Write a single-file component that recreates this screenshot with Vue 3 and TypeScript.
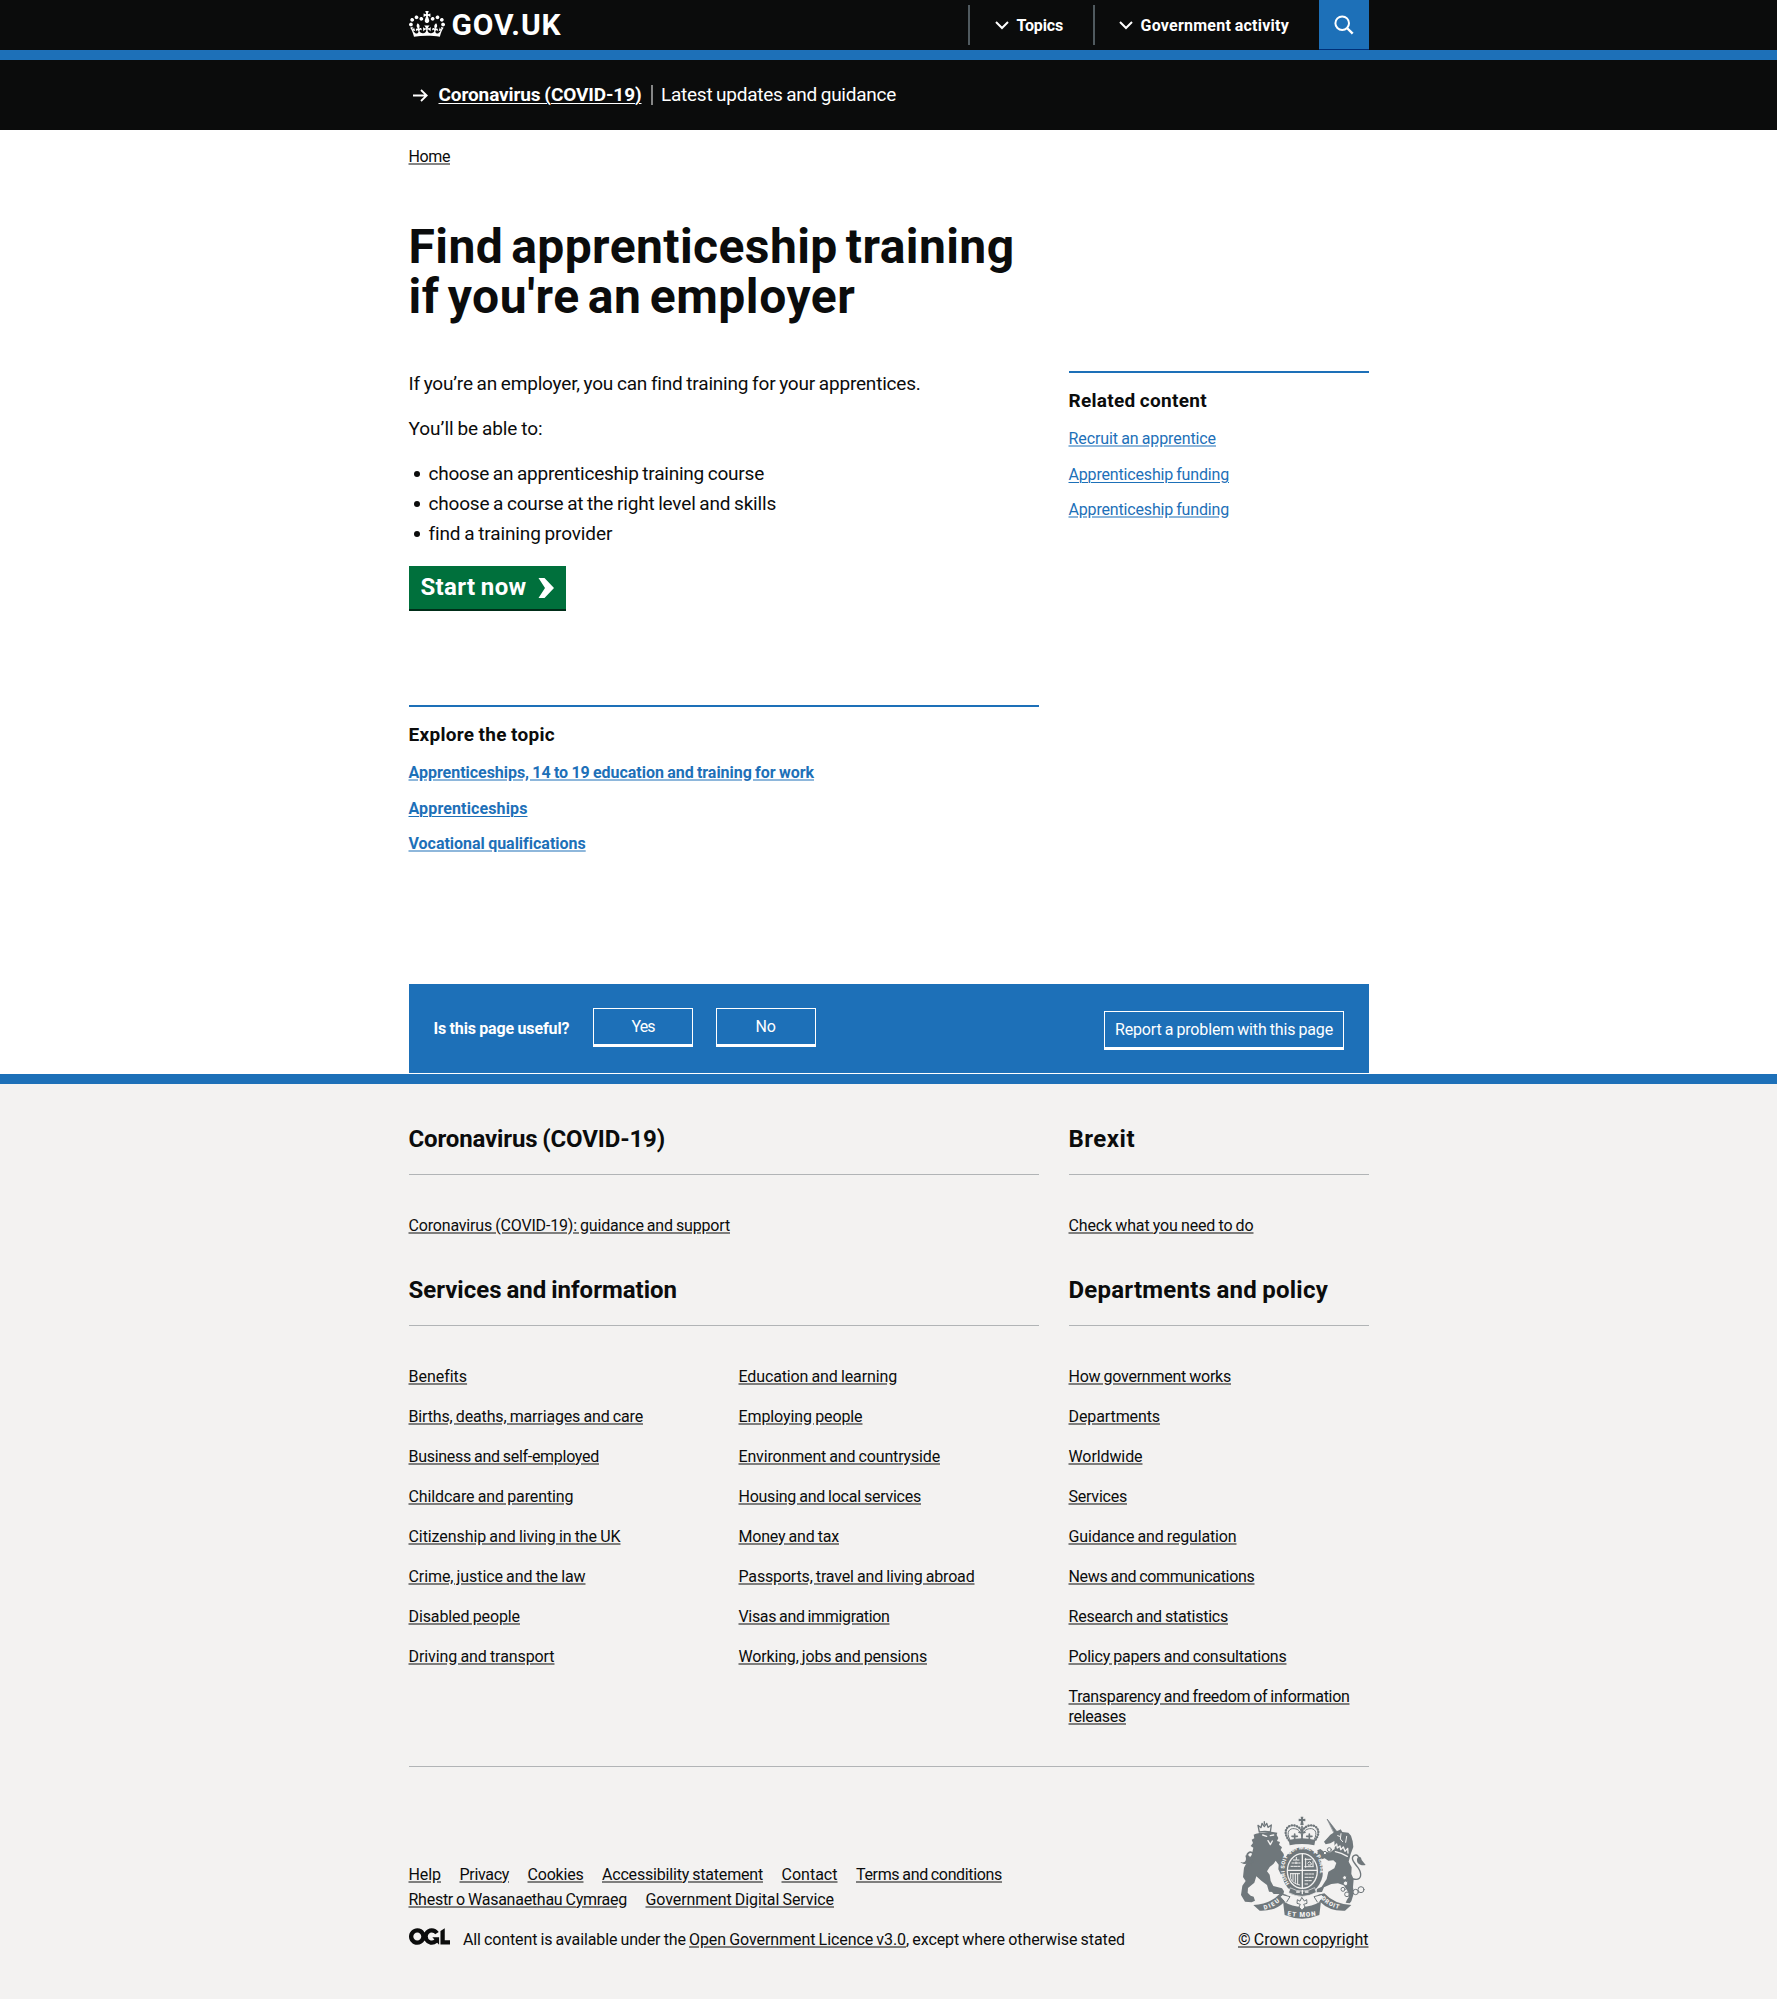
<script setup lang="ts">
import type { Directive } from 'vue'

interface Item {
  text: string
  w: number
  soft?: boolean
}

// Tracks a run of text so that it fills the given width in pixels.
const vFit: Directive<HTMLElement, number> = {
  mounted(el, { value }) {
    el.style.letterSpacing = '0'
    const natural = el.getBoundingClientRect().width
    const count = (el.textContent ?? '').length
    if (count > 0) el.style.letterSpacing = `${((value - natural) / count).toFixed(4)}px`
  },
}

const bullets: Item[] = [
  { text: 'choose an apprenticeship training course', w: 335.5 },
  { text: 'choose a course at the right level and skills', w: 347.5 },
  { text: 'find a training provider', w: 183 },
]

const related: Item[] = [
  { text: 'Recruit an apprentice', w: 147.5, soft: true },
  { text: 'Apprenticeship funding', w: 160.5 },
  { text: 'Apprenticeship funding', w: 160.5, soft: true },
]

const topics: Item[] = [
  { text: 'Apprenticeships, 14 to 19 education and training for work', w: 405.5, soft: true },
  { text: 'Apprenticeships', w: 119 },
  { text: 'Vocational qualifications', w: 177, soft: true },
]

const servicesA: Item[] = [
  { text: 'Benefits', w: 58 },
  { text: 'Births, deaths, marriages and care', w: 234.5 },
  { text: 'Business and self-employed', w: 190.5 },
  { text: 'Childcare and parenting', w: 165 },
  { text: 'Citizenship and living in the UK', w: 212 },
  { text: 'Crime, justice and the law', w: 177 },
  { text: 'Disabled people', w: 111.5 },
  { text: 'Driving and transport', w: 146 },
]

const servicesB: Item[] = [
  { text: 'Education and learning', w: 158.5 },
  { text: 'Employing people', w: 124 },
  { text: 'Environment and countryside', w: 201.5 },
  { text: 'Housing and local services', w: 182.5 },
  { text: 'Money and tax', w: 100.5 },
  { text: 'Passports, travel and living abroad', w: 236 },
  { text: 'Visas and immigration', w: 151 },
  { text: 'Working, jobs and pensions', w: 188.5 },
]

const departments: Item[] = [
  { text: 'How government works', w: 162.5 },
  { text: 'Departments', w: 91.5 },
  { text: 'Worldwide', w: 74 },
  { text: 'Services', w: 58.5 },
  { text: 'Guidance and regulation', w: 168 },
  { text: 'News and communications', w: 186 },
  { text: 'Research and statistics', w: 159.5 },
  { text: 'Policy papers and consultations', w: 218 },
]

const meta: Item[][] = [
  [
    { text: 'Help', w: 32.5 },
    { text: 'Privacy', w: 49.5 },
    { text: 'Cookies', w: 56 },
    { text: 'Accessibility statement', w: 161 },
    { text: 'Contact', w: 56 },
    { text: 'Terms and conditions', w: 146 },
  ],
  [
    { text: 'Rhestr o Wasanaethau Cymraeg', w: 218.5 },
    { text: 'Government Digital Service', w: 188.5 },
  ],
]
</script>

<template>
  <div class="page">
    <header class="header">
      <div class="wrap header-row">
        <a class="logo">
          <svg class="crown" viewBox="0 0 132 97" preserveAspectRatio="none" aria-hidden="true">
            <path
              fill="#fff"
              fill-rule="evenodd"
              d="M25 30.2c3.5 1.5 7.7-.2 9.1-3.7 1.5-3.6-.2-7.8-3.9-9.2-3.6-1.4-7.6.3-9.1 3.9-1.4 3.5.3 7.5 3.9 9zM9 39.5c3.6 1.5 7.8-.2 9.2-3.7 1.5-3.6-.2-7.8-3.9-9.1-3.6-1.5-7.6.2-9.1 3.8-1.4 3.5.3 7.5 3.8 9zM4.4 57.2c3.5 1.5 7.7-.2 9.1-3.8 1.5-3.6-.2-7.7-3.9-9.1-3.5-1.5-7.6.3-9.1 3.8-1.4 3.5.3 7.6 3.9 9.1zm38.3-21.4c3.5 1.5 7.7-.2 9.1-3.8 1.5-3.6-.2-7.7-3.9-9.1-3.6-1.5-7.6.3-9.1 3.8-1.3 3.6.4 7.7 3.9 9.1zm64.4-5.6c-3.6 1.5-7.8-.2-9.1-3.7-1.5-3.6.2-7.8 3.8-9.2 3.6-1.4 7.7.3 9.2 3.9 1.3 3.5-.4 7.5-3.9 9zm15.9 9.3c-3.6 1.5-7.7-.2-9.1-3.7-1.5-3.6.2-7.8 3.7-9.1 3.6-1.5 7.7.2 9.2 3.8 1.5 3.5-.3 7.5-3.8 9zm4.7 17.7c-3.6 1.5-7.8-.2-9.2-3.8-1.5-3.6.2-7.7 3.9-9.1 3.6-1.5 7.7.3 9.2 3.8 1.3 3.5-.4 7.6-3.9 9.1zM89.3 35.8c-3.6 1.5-7.8-.2-9.2-3.8-1.4-3.6.2-7.7 3.9-9.1 3.6-1.5 7.7.3 9.2 3.8 1.4 3.6-.3 7.7-3.9 9.1zM69.7 17.7l8.9 4.7V9.3l-8.9 2.8c-.2-.3-.5-.6-.9-.9L72.4 0H59.6l3.5 11.2c-.3.3-.6.5-.9.9l-8.8-2.8v13.1l8.8-4.7c.3.3.6.7.9.9l-5 15.4v.1c-.2.8-.4 1.6-.4 2.4 0 4.1 3.1 7.5 7 8.1h.2c.3 0 .7.1 1 .1.4 0 .7 0 1-.1h.2c4-.6 7.1-4.1 7.1-8.1 0-.8-.1-1.7-.4-2.4V34l-5.1-15.4c.4-.2.7-.6 1-.9zM66 92.8c16.9 0 32.8 1.1 47.1 3.2 4-16.9 8.9-26.7 14-33.5l-9.6-3.4c1 4.9 1.1 7.2 0 10.2-1.5-1.4-3-4.3-4.2-8.7L108.6 76c2.8-2 5-3.2 7.5-3.3-4.4 9.4-10 11.9-13.6 11.2-4.3-.8-6.3-4.6-5.6-7.9 1-4.7 5.7-5.9 8-.5 4.3-8.7-3-11.4-7.6-8.8 7.1-7.2 7.9-13.5 2.1-21.1-8 6.1-8.1 12.3-4.5 20.8-4.7-5.4-12.1-2.5-9.5 6.2 3.4-5.2 7.9-2 7.2 3.1-.6 4.3-6.4 7.8-13.5 7.2-10.3-.9-10.9-8-11.2-13.8 2.5-.5 7.1 1.8 11 7.3L80.2 60c-4.1 4.4-8 5.3-12.3 5.4 1.4-4.4 8-11.6 8-11.6H55.5s6.4 7.2 7.9 11.6c-4.2-.1-8-1-12.3-5.4l1.4 16.4c3.9-5.5 8.5-7.7 10.9-7.3-.3 5.8-.9 12.8-11.1 13.8-7.2.6-12.9-2.9-13.5-7.2-.7-5 3.8-8.3 7.1-3.1 2.7-8.7-4.6-11.6-9.4-6.2 3.7-8.5 3.6-14.7-4.6-20.8-5.8 7.6-5 13.9 2.2 21.1-4.7-2.6-11.9.1-7.7 8.8 2.3-5.5 7.1-4.2 8.1.5.7 3.3-1.3 7.1-5.7 7.9-3.5.7-9-1.8-13.5-11.2 2.5.1 4.7 1.3 7.5 3.3l-4.7-15.4c-1.2 4.4-2.7 7.2-4.3 8.7-1.1-3-.9-5.3 0-10.2l-9.5 3.4c5 6.9 9.9 16.7 14 33.5 14.8-2.1 30.8-3.2 47.7-3.2z"
            />
          </svg>
          <span v-fit="110" class="logo-text">GOV.UK</span>
        </a>
        <nav class="nav">
          <a class="nav-item nav-topics">
            <svg class="chevron" viewBox="0 0 14 9"><path d="M1 1l6 6 6-6" fill="none" stroke="#fff" stroke-width="2" /></svg>
            <span v-fit="46.5">Topics</span>
          </a>
          <a class="nav-item nav-gov">
            <svg class="chevron" viewBox="0 0 14 9"><path d="M1 1l6 6 6-6" fill="none" stroke="#fff" stroke-width="2" /></svg>
            <span v-fit="148.5">Government activity</span>
          </a>
          <a class="search">
            <svg width="20" height="20" viewBox="0 0 20 20">
              <circle cx="8.2" cy="8.2" r="6.8" fill="none" stroke="#fff" stroke-width="2" />
              <path d="M13 13l5.7 5.7" stroke="#fff" stroke-width="2.4" />
            </svg>
          </a>
        </nav>
      </div>
    </header>

    <div class="covid">
      <div class="wrap covid-row">
        <svg class="arrow" width="15" height="13" viewBox="0 0 15 13">
          <path d="M0 6.5h13.5M8 1l5.7 5.5L8 12" fill="none" stroke="#fff" stroke-width="1.8" />
        </svg>
        <a v-fit="203" class="covid-link">Coronavirus (COVID-19)</a>
        <span class="covid-bar"></span>
        <span v-fit="235">Latest updates and guidance</span>
      </div>
    </div>

    <main class="wrap main">
      <nav class="crumbs"><a v-fit="41.5" class="soft">Home</a></nav>

      <h1>
        <span v-fit="606">Find apprenticeship training</span>
        <span v-fit="447">if you're an employer</span>
      </h1>

      <div class="columns">
        <div class="content">
          <p><span v-fit="511.5">If you’re an employer, you can find training for your apprentices.</span></p>
          <p><span v-fit="134">You’ll be able to:</span></p>
          <ul class="bullets">
            <li v-for="b in bullets" :key="b.text"><span v-fit="b.w">{{ b.text }}</span></li>
          </ul>
          <a class="start">
            <span v-fit="106">Start now</span>
            <svg width="16" height="20" viewBox="0 0 16 20"><path fill="#fff" d="M.5 0h6L16 10 6.500 20h-6L7 10z" /></svg>
          </a>
        </div>
        <aside class="related">
          <h2><span v-fit="138.5">Related content</span></h2>
          <ul>
            <li v-for="(r, i) in related" :key="i"><a v-fit="r.w" :class="{ soft: r.soft }">{{ r.text }}</a></li>
          </ul>
        </aside>
      </div>

      <section class="related explore">
        <h2><span v-fit="146.5">Explore the topic</span></h2>
        <ul>
          <li v-for="t in topics" :key="t.text"><a v-fit="t.w" :class="{ soft: t.soft }">{{ t.text }}</a></li>
        </ul>
      </section>

      <section class="feedback">
        <b v-fit="136">Is this page useful?</b>
        <button type="button" class="fb yes"><span v-fit="23">Yes</span></button>
        <button type="button" class="fb no"><span v-fit="20">No</span></button>
        <button type="button" class="fb report"><span v-fit="218">Report a problem with this page</span></button>
      </section>
    </main>

    <footer class="footer">
      <div class="wrap">
        <div class="foot-grid foot-first">
          <section>
            <h2><span v-fit="256.5">Coronavirus (COVID-19)</span></h2>
            <ul><li><a v-fit="321.5">Coronavirus (COVID-19): guidance and support</a></li></ul>
          </section>
          <section>
            <h2><span v-fit="66.5">Brexit</span></h2>
            <ul><li><a v-fit="185">Check what you need to do</a></li></ul>
          </section>
        </div>
        <div class="foot-grid">
          <section>
            <h2><span v-fit="268.5">Services and information</span></h2>
            <div class="two">
              <ul><li v-for="s in servicesA" :key="s.text"><a v-fit="s.w">{{ s.text }}</a></li></ul>
              <ul><li v-for="s in servicesB" :key="s.text"><a v-fit="s.w">{{ s.text }}</a></li></ul>
            </div>
          </section>
          <section>
            <h2><span v-fit="259.5">Departments and policy</span></h2>
            <ul>
              <li v-for="d in departments" :key="d.text"><a v-fit="d.w">{{ d.text }}</a></li>
              <li>
                <a><span v-fit="281">Transparency and freedom of information</span><br /><span v-fit="57.5">releases</span></a>
              </li>
            </ul>
          </section>
        </div>

        <div class="foot-meta">
          <div class="meta-left">
            <div v-for="(row, i) in meta" :key="i" class="meta-row">
              <a v-for="m in row" :key="m.text" v-fit="m.w">{{ m.text }}</a>
            </div>
            <div class="licence">
              <svg class="ogl" width="41" height="17" viewBox="0 0 483.2 195.7">
                <path
                  fill="#0b0c0c"
                  d="M421.5 142.8V.1l-50.7 32.3v161.1h112.4v-50.7zm-122.3-9.6A47.12 47.12 0 0 1 221 97.8c0-26 21.1-47.1 47.1-47.1 16.7 0 31.4 8.7 39.7 21.8l42.7-27.2A97.63 97.63 0 0 0 268.1 0c-36.5 0-68.3 20.1-85.1 49.7A98 98 0 0 0 97.8 0C43.9 0 0 43.9 0 97.8s43.9 97.8 97.8 97.8c36.5 0 68.3-20.1 85.1-49.7a97.76 97.76 0 0 0 149.6 25.4l19.4 22.2h3v-87.8h-80l24.3 27.5zM97.8 145c-26 0-47.1-21.1-47.1-47.1s21.1-47.1 47.1-47.1 47.1 21.1 47.1 47.1S123.8 145 97.8 145"
                />
              </svg>
              <span class="licence-text"><span v-fit="226">All content is available under the </span><a v-fit="217">Open Government Licence v3.0</a><span v-fit="219">, except where otherwise stated</span></span>
            </div>
          </div>
          <div class="meta-right">
            <svg class="crest" width="126" height="103" viewBox="59 49 378 309" fill="#6f777b" stroke-linecap="round" stroke-linejoin="round">
              <!-- royal crown -->
              <g>
                <path d="M241 51h8l-1 7 7-1v8l-7-1 2 12h-10l2-12-7 1v-8l7 1z" />
                <path d="M205 121q40-10 80 0l-3 16q-37-8-74 0z" />
                <path d="M206 122C182 92 206 70 228 79c9 4 14 10 17 16 3-6 8-12 17-16 22-9 46 13 22 43" fill="none" stroke="#6f777b" stroke-width="7" stroke-dasharray="1 7" />
                <path d="M208 119c-12-22 0-34 14-32 12 1 20 10 23 24 3-14 11-23 23-24 14-2 26 10 14 32" fill="none" stroke="#6f777b" stroke-width="3" />
                <path d="M245 80v38M236 98h18M223 103v15M215 110h16M267 103v15M259 110h16" fill="none" stroke="#6f777b" stroke-width="5" />
              </g>
              <!-- lion -->
              <g>
                <path d="M117 97l-4-20 9 7 3-13 7 10 7-10 4 12 10-7-3 21q-16-4-33 0z" fill="none" stroke="#6f777b" stroke-width="4" />
                <path d="M132 66v8" stroke="#6f777b" stroke-width="4" />
                <path d="M121 99l32-3 18 3-2 7 5 9-4 9 9 3-3 8 9 8-4 8 8 10 6 18-1 22-9 10 6 8-9 6-8-16 1-14-9-12-6 9-12 10-8 13 8 10 3 19 8 15 26 7 6 9-2 11-10-3-19 0-5-6-9-1-6-20-17-13-15-13-6 19-19 16-1 14 9 9 9 3 4 12-10 5-20-2-8-13-4-7 4-28 10-14-8-12 3-28 14-26 9-12 5-22-8-5 7-9-4-10 8-4-2-11 7-3z" />
                <path d="M127 106l12 4M150 108l10-2M143 123l7 12 6-11" fill="none" stroke="#f3f2f1" stroke-width="4" />
                <path d="M94 238c-22-3-21-20-8-35 14-17 20-36 9-44-7-5-18 4-13 13" fill="none" stroke="#6f777b" stroke-width="5" />
                <path d="M60 187c15 5 20-6 15-19 11-4 16 3 14 13-3 12-17 17-29 6z" />
              </g>
              <!-- unicorn -->
              <g>
                <path d="M321 59l29 37-8 4z" stroke="#6f777b" stroke-width="2" />
                <path d="M330 105l14-9 12-4 5-3 5 8 18 2 8 9 5 17 2 17-8 21-6 23 9 17-1 20 7 16-2 24 3 16-8 26-5 6-12-2 4-9 5-7-3-18-12-18-17-6-20 2-22 10-6 14-17 1 2-10 14-7 15-23 5-22 18-10 6-16-9-8-15 1-11-7-14 5 4 20-9-6-6-14-5-14 9-5-1-10 9-4 12 9 18 1 13-10-1-24-12 7-14 3-5-8 11-12z" />
                <path d="M341 142l8-9 2 12 8-6 2 11 8-8 5 13 8-9 1 14M345 156q18 4 36 14" fill="none" stroke="#f3f2f1" stroke-width="4" />
                <path d="M352 108l6 2M362 102l-2 16 7 8M379 110l-3 18" fill="none" stroke="#f3f2f1" stroke-width="3" />
                <path d="M399 238c27 6 26-17 14-34-13-16-24-30-11-37 9-4 16 5 11 12" fill="none" stroke="#6f777b" stroke-width="4" />
                <path d="M436 196c-15 4-28-4-26-17 6-14 13-6 14 2z" />
                <g fill="#f3f2f1" stroke="#6f777b" stroke-width="3">
                  <circle cx="327" cy="150" r="6" /><circle cx="314" cy="160" r="5" />
                  <circle cx="373" cy="234" r="6" /><circle cx="376" cy="251" r="7" />
                  <circle cx="368" cy="269" r="6" /><circle cx="380" cy="284" r="7" />
                  <circle cx="406" cy="277" r="8" /><circle cx="422" cy="270" r="9" />
                </g>
              </g>
              <!-- garter and shield -->
              <ellipse cx="246" cy="214" rx="62" ry="71" />
              <ellipse cx="246" cy="214" rx="47" ry="54" fill="#f3f2f1" />
              <ellipse cx="246" cy="214" rx="43" ry="50" />
              <path d="M203 212h86M246 164v100" stroke="#f3f2f1" stroke-width="4" />
              <g stroke="#f3f2f1" stroke-width="3" fill="none">
                <path d="M219 181h20M215 190h24M212 200h27M228 173v8M227 187v5" stroke-dasharray="7 3" />
                <path d="M254 179h18M253 201h26M256 176v27M278 184v15M262 190q5-8 10 0t-8 6" />
                <path d="M211 222v15q7 15 27 19M218 222v20M225 222v26M232 222v30M210 222h28" />
                <path d="M254 223h26M254 233h25M254 243h20M254 253h11" stroke-dasharray="8 3" />
              </g>
              <path id="garterPath" d="M208 251C181 223 187 149 246 149s67 80 36 106" fill="none" />
              <text class="crest-text" font-size="16" fill="#f3f2f1"><textPath href="#garterPath" textLength="238">HONI SOIT QUI MAL Y PENSE</textPath></text>
              <path d="M211 265q35 20 72-1l5 14q-42 24-83 1z" stroke="#f3f2f1" stroke-width="2" />
              <path d="M229 277h8M255 277h8M246 272v10" stroke="#f3f2f1" stroke-width="4" />
              <!-- motto scroll -->
              <path d="M99 316Q150 314 180 281L198 285Q210 297 192 307Q165 335 118 333z" />
              <path d="M393 316Q342 314 312 281L294 285Q282 297 300 307Q327 335 374 333z" />
              <path d="M191 304l-12-13 8-6 22 6-10 16M299 304l12-13-8-6-22 6 10 16" fill="#f3f2f1" stroke="#6f777b" stroke-width="3" />
              <path d="M188 305q57 34 114 0l-5 41q-52 22-104 0z" />
              <path d="M245 294l7 10 7-4 1 11-10 3 4 8-9 10-9-10 4-8-10-3 1-11 7 4z" fill="#f3f2f1" stroke="#6f777b" stroke-width="3" />
              <path id="dieuPath" d="M132 330q29-6 52-30" fill="none" />
              <path id="monPath" d="M201 347q44 9 90 0" fill="none" />
              <path id="droitPath" d="M302 297q23 25 61 33" fill="none" />
              <g class="crest-text" fill="#f3f2f1">
                <text font-size="18"><textPath href="#dieuPath" textLength="53">DIEU</textPath></text>
                <text font-size="19"><textPath href="#monPath" textLength="86">ET MON</textPath></text>
                <text font-size="18"><textPath href="#droitPath" textLength="62">DROIT</textPath></text>
              </g>
            </svg>
            <a v-fit="130.5">© Crown copyright</a>
          </div>
        </div>
      </div>
    </footer>
  </div>
</template>

<style>
body {
  margin: 0;
  background: #fff;
}
</style>

<style scoped>
.page {
  font-family: Roboto, 'Liberation Sans', sans-serif;
  font-size: 16px;
  line-height: 20px;
  color: #0b0c0c;
  height: 1999px;
  overflow: hidden;
  display: flex;
  flex-direction: column;
}
.page span,
.page a,
.page b {
  word-spacing: -0.04em;
}
.wrap {
  width: 960px;
  margin: 0 auto;
}
h1,
h2,
p,
ul {
  margin: 0;
  padding: 0;
}
ul {
  list-style: none;
}
a {
  white-space: nowrap;
}
.header {
  background: #0b0c0c;
  border-bottom: 10px solid #1d70b8;
}
.header-row {
  height: 50px;
  display: flex;
  justify-content: space-between;
}
.logo {
  display: flex;
  color: #fff;
  padding-top: 11px;
}
.crown {
  width: 36px;
  height: 26px;
}
.logo-text {
  margin-left: 7px;
  font-size: 30px;
  line-height: 28px;
  font-weight: 700;
  white-space: nowrap;
}
.nav {
  display: flex;
  color: #fff;
  font-weight: 700;
}
.nav-item {
  display: flex;
  align-items: center;
  box-sizing: border-box;
  height: 40px;
  margin-top: 5px;
  padding-left: 24.500px;
  border-left: 2px solid #505a5f;
}
.nav-item span {
  padding-top: 1px;
}
.nav-topics {
  width: 125px;
}
.nav-gov {
  width: 225.5px;
}
.nav-gov .chevron {
  margin-left: -1px;
}
.chevron {
  width: 14px;
  height: 9px;
  margin-right: 8px;
  margin-top: 1px;
}
.search {
  width: 50px;
  height: 49px;
  background: #1d70b8;
  border-bottom: 1px solid #003078;
}
.search svg {
  display: block;
  margin: 15px 0 0 15.5px;
}
.covid {
  background: #0b0c0c;
  height: 70px;
  color: #fff;
  font-size: 19px;
  line-height: 25px;
}
.covid-row {
  display: flex;
  padding-top: 22px;
  align-items: center;
}
.arrow {
  margin: 1px 11px 0 4px;
}
.covid-link {
  font-weight: 700;
  text-decoration: underline 1px;
  text-underline-offset: 2px;
}
.covid-bar {
  width: 2px;
  height: 20px;
  background: #858686;
  margin: 0 8px 0 9.5px;
}
.crumbs {
  padding-top: 17px;
}
.crumbs a {
  text-decoration: underline 2px rgba(11, 12, 12, 0.5);
  text-underline-offset: 1px;
}
h1 {
  margin-top: 55px;
  font-size: 48px;
  line-height: 50px;
  font-weight: 700;
}
.page h1 span {
  display: block;
  width: fit-content;
  white-space: nowrap;
  word-spacing: -0.09em;
}
.columns {
  display: flex;
  justify-content: space-between;
  margin-top: 49px;
  height: 334px;
}
.content {
  width: 630px;
  font-size: 19px;
  line-height: 25px;
}
.content p {
  margin-bottom: 20px;
  white-space: nowrap;
}
.bullets li {
  display: flex;
  align-items: center;
  margin-bottom: 5px;
}
.bullets li::before {
  content: '';
  width: 6px;
  height: 6px;
  border-radius: 50%;
  background: #0b0c0c;
  margin: 0 9px 0 5px;
}
.start {
  display: flex;
  align-items: center;
  box-sizing: border-box;
  width: 157.5px;
  height: 45px;
  margin-top: 20px;
  padding-left: 12px;
  background: #00703c;
  border-bottom: 2px solid #002d18;
  color: #fff;
  font-size: 24px;
  font-weight: 700;
}
.start svg {
  margin-left: 11px;
}
.related {
  width: 300px;
  border-top: 2px solid #1d70b8;
  padding-top: 15px;
}
.related h2 {
  font-size: 19px;
  line-height: 25px;
  font-weight: 700;
  margin-bottom: 16px;
}
.related li {
  height: 20.5px;
  line-height: 20.5px;
  margin-bottom: 15px;
}
.related a {
  color: #1d70b8;
  text-decoration: underline 1px;
  text-underline-offset: 2px;
}
.related a.soft {
  text-decoration: underline 2px rgba(29, 112, 184, 0.5);
  text-underline-offset: 1px;
}
.explore {
  width: 630px;
  height: 261.5px;
  font-weight: 700;
}
.feedback {
  display: flex;
  box-sizing: border-box;
  height: 89.5px;
  padding: 24.5px 24.5px 0 25px;
  background: #1d70b8;
  color: #fff;
}
.feedback b {
  margin-top: 10.5px;
  white-space: nowrap;
}
.fb {
  box-sizing: border-box;
  height: 39px;
  padding: 1px 0 0;
  border: 1px solid #fff;
  border-bottom-width: 3px;
  background: transparent;
  color: #fff;
  font: inherit;
  white-space: nowrap;
}
.yes {
  width: 100px;
  margin-left: 23.5px;
}
.no {
  width: 100px;
  margin-left: 22.5px;
}
.report {
  width: 240px;
  margin: 3px 0 0 auto;
}
.footer {
  flex: 1;
  margin-top: 1px;
  background: #f3f2f1;
  border-top: 10px solid #1d70b8;
}
.foot-grid {
  display: grid;
  grid-template-columns: 630px 300px;
  gap: 30px;
  padding-top: 39.5px;
}
.foot-grid h2 {
  font-size: 24px;
  line-height: 30px;
  font-weight: 700;
  padding-bottom: 20px;
  border-bottom: 1px solid #b1b4b6;
  margin-bottom: 41px;
}
.foot-grid li {
  margin-bottom: 20px;
}
.foot-first li {
  margin-bottom: -0.5px;
}
.two {
  display: grid;
  grid-template-columns: 300px 300px;
  gap: 30px;
}
.footer a {
  text-decoration: underline 2px rgba(11, 12, 12, 0.5);
  text-underline-offset: 1px;
}
.foot-meta {
  display: flex;
  justify-content: space-between;
  margin-top: 19px;
  border-top: 1px solid #b1b4b6;
}
.meta-left {
  padding-top: 98px;
}
.meta-row {
  display: flex;
  gap: 18.5px;
  height: 25px;
}
.licence {
  display: flex;
  padding-top: 13.500px;
}
.ogl {
  margin-right: 13.500px;
}
.licence-text {
  white-space: pre;
  padding-top: 1.500px;
}
.meta-right {
  display: flex;
  flex-direction: column;
  align-items: flex-end;
  padding-top: 49.5px;
}
.crest {
  margin: 0 2.5px 10.5px 0;
}
.crest-text {
  font-family: Roboto, sans-serif;
  font-weight: 900;
}
</style>
